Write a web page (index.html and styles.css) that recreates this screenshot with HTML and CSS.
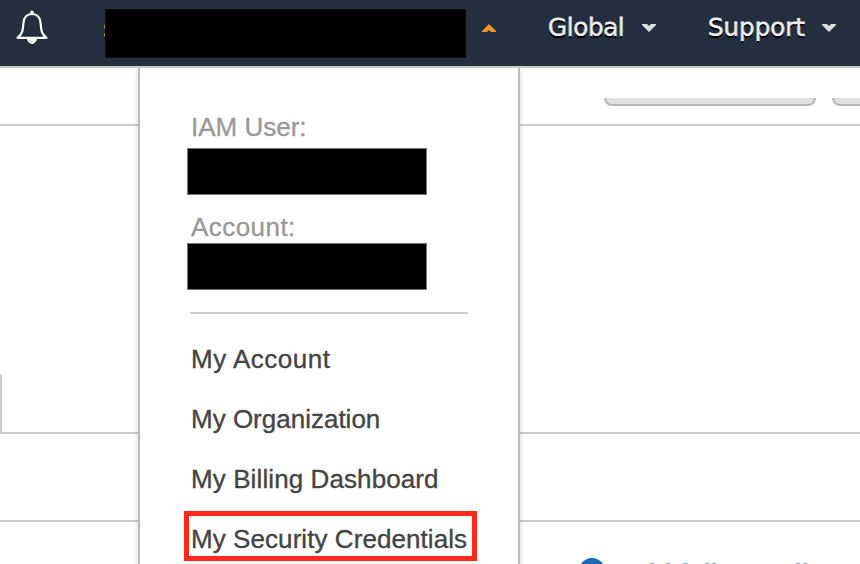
FILE: index.html
```html
<!DOCTYPE html>
<html lang="en">
<head>
<meta charset="utf-8">
<title>Account menu</title>
<link rel="stylesheet" href="styles.css">
</head>
<body>
<header class="navbar">
  <svg class="bell" width="32" height="36" viewBox="0 0 32 36" fill="none" stroke="#fff" stroke-width="2.2" stroke-linejoin="round" stroke-linecap="round">
    <path d="M1.5 27.800C6 24.500 7 21 7.400 13.500C7.800 7.500 10.500 4 16 4C21.500 4 24.200 7.500 24.600 13.500C25 21 26 24.500 30.500 27.800Z"/>
    <circle cx="16" cy="2.400" r="1.400" fill="#fff" stroke-width="1"/>
    <path d="M11.500 29C12 35 20 35 20.500 29Z" fill="#fff" stroke-width="1"/>
    <path d="M13.500 30.500L15.500 32.500" stroke="#8b929b" stroke-width=".8"/>
  </svg>
  <div class="user"><span class="initial">s</span><span class="mask"></span></div>
  <svg class="caret up" width="14" height="8"><path d="M0 8V7L7 0L14 7V8H9L7 6L5 8Z" fill="#f79523"/></svg>
  <span class="nav-item global">Global</span>
  <svg class="caret" width="14" height="8"><path d="M0 0H5L7 2L9 0H14V1L7 8L0 1Z" fill="#ddd"/></svg>
  <span class="nav-item support">Support</span>
  <svg class="caret" width="14" height="8"><path d="M0 0H5L7 2L9 0H14V1L7 8L0 1Z" fill="#ddd"/></svg>
</header>
<main class="page">
  <section class="toolbar"><span class="button"></span><span class="button"></span></section>
  <section class="content"><div class="tab"></div></section>
  <section class="strip"></section>
  <section class="info"><span class="dot"></span><span class="link">Add full overall</span></section>
</main>
<nav class="menu">
  <div class="label">IAM User:</div>
  <div class="redacted"></div>
  <div class="label second">Account:</div>
  <div class="redacted"></div>
  <hr class="rule">
  <ul class="items">
    <li class="account">My Account</li>
    <li class="organization">My Organization</li>
    <li class="billing">My Billing Dashboard</li>
    <li class="marked">My Security Credentials</li>
  </ul>
</nav>
</body>
</html>
```
FILE: styles.css
```css
* { box-sizing: border-box; }
body { margin: 0; width: 860px; height: 564px; overflow: hidden; position: relative; background: #fff; font-family: "Liberation Sans", Arial, sans-serif; font-size: 26px; }
.navbar { height: 68px; display: flex; align-items: flex-start; background: #232f3e; border-bottom: 2px solid #c8c8c8; }
.navbar svg { flex: none; }
.bell { margin: 10px 0 0 16px; }
.user { position: relative; width: 364px; height: 48px; margin: 10px 0 0 54px; flex: none; }
.initial { position: absolute; left: 1px; top: 2px; font: 24px/34px "DejaVu Sans", sans-serif; color: #f90; -webkit-text-stroke: .6px #f90; text-shadow: 0 2px 0 #000; }
.mask { position: absolute; left: 3px; top: -1px; width: 361px; height: 49px; background: #000; border: 1px solid #0a0e13; }
.caret { margin-top: 24px; }
.up { margin-left: 16px; }
.nav-item { flex: none; font: 24.500px/34px "DejaVu Sans", sans-serif; color: #eee; -webkit-text-stroke: .8px #eee; paint-order: stroke fill; text-shadow: 0 2px 0 #000; margin-top: 11px; white-space: nowrap; }
.global { width: 94px; margin-left: 52px; letter-spacing: -.3px; }
.support { width: 114px; margin-left: 52px; }
.page { display: flex; flex-direction: column; }
.toolbar { height: 58px; border-bottom: 2px solid #ccc; padding: 30px 0 0 604px; display: flex; gap: 16px; overflow: hidden; }
.button { flex: none; width: 212px; height: 8px; background: #e0e0e0; border: 2px solid #b8b8b8; border-top: 0; border-radius: 0 0 8px 8px; }
.content { height: 308px; border-bottom: 2px solid #ccc; display: flex; align-items: flex-end; }
.tab { width: 2px; height: 58px; background: #ccc; border-top-right-radius: 2px; }
.strip { height: 88px; border-bottom: 2px solid #ccc; }
.info { height: 42px; display: flex; padding: 36px 0 0 579px; overflow: hidden; }
.dot { flex: none; width: 26px; height: 26px; border-radius: 50%; background: #1a67b8; }
.link { margin: 0 0 0 16px; line-height: 30px; font-weight: bold; color: #7fa9d2; white-space: nowrap; }
.menu { position: absolute; left: 138px; top: 68px; width: 382px; height: 500px; background: #fff; border: solid #bbb; border-width: 0 2px; box-shadow: 0 2px 6px rgba(0,0,0,.18); clip-path: inset(0 -10px 0 -10px); padding: 44px 50px 0; }
.label { height: 30px; line-height: 30px; color: #999; -webkit-text-stroke: .35px #999; white-space: nowrap; padding-left: 1px; }
.redacted { width: 240px; height: 47px; margin: 6px 0 0 -3px; background: #000; border: 1px solid #777; }
.label.second { margin-top: 17px; letter-spacing: .45px; }
.second + .redacted { margin-top: 1px; }
.rule { height: 2px; margin: 22px 0 15px; border: 0; background: #ccc; width: 278px; }
.items { list-style: none; margin: 0; padding: 0; color: #444; -webkit-text-stroke: .35px #444; }
.items li { height: 60px; line-height: 60px; padding-left: 1px; white-space: nowrap; }
.items .account { letter-spacing: .5px; }
.items .billing { letter-spacing: .1px; }
.items .marked { height: 50px; width: 293px; margin: 2px 0 0 -6px; border: 5px solid #ff2a1c; line-height: 46px; padding-left: 2px; letter-spacing: .07px; }
```
